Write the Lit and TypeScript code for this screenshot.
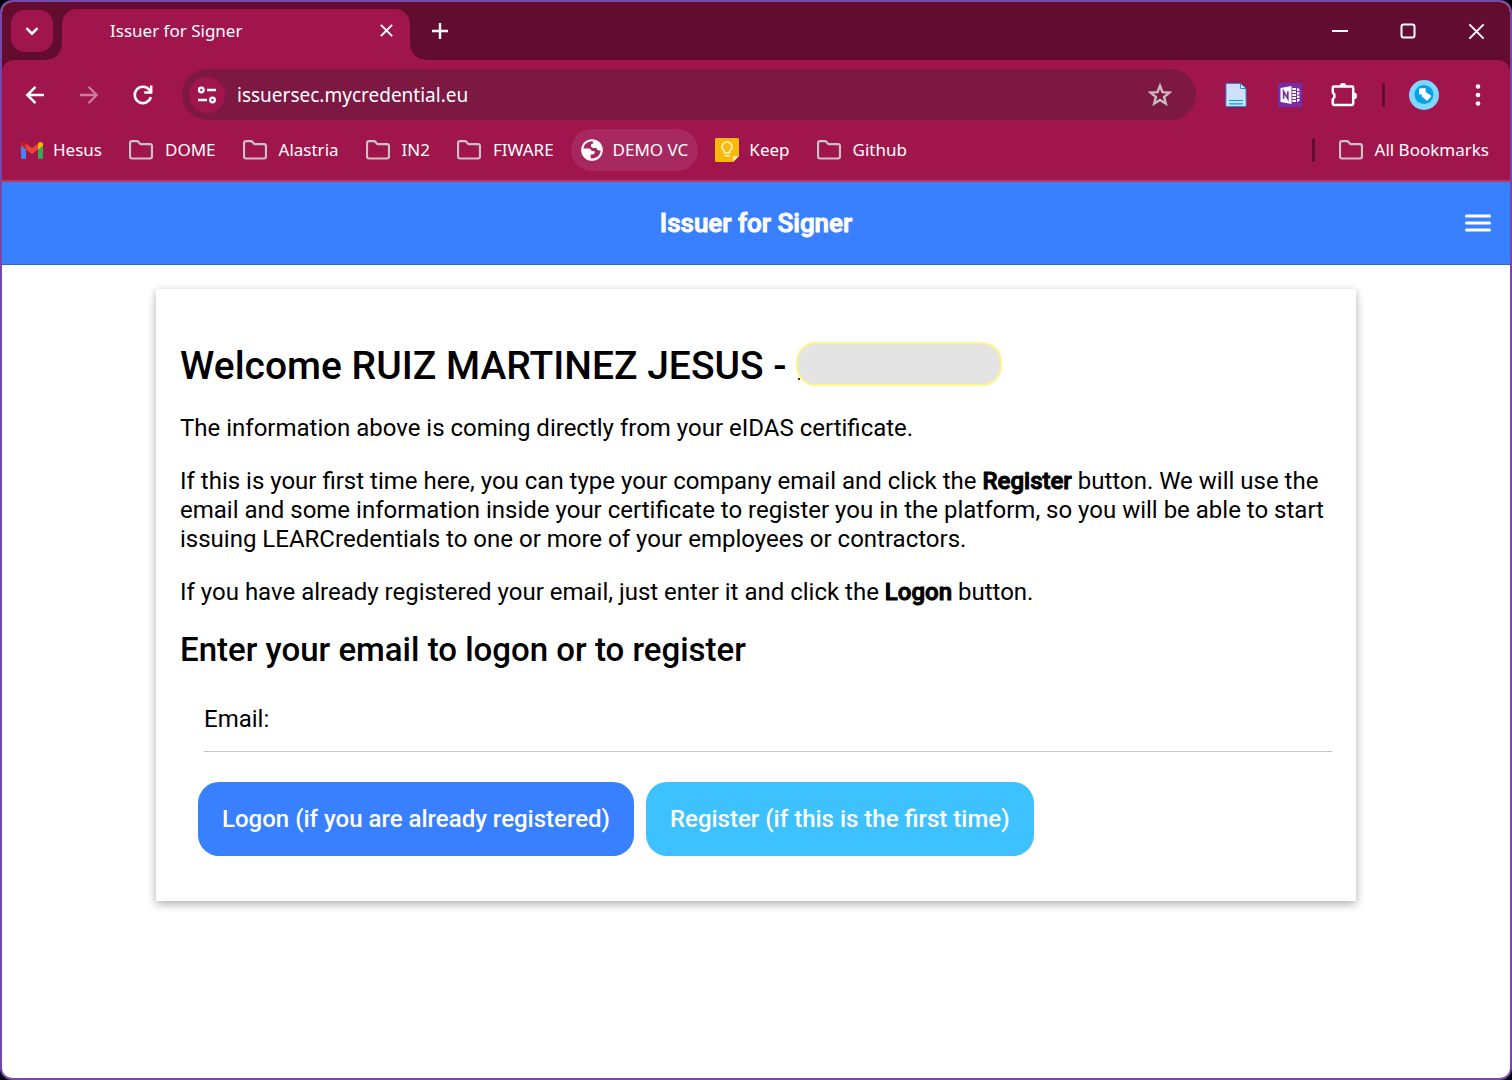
import { LitElement, html, css, svg } from "lit";
import { customElement } from "lit/decorators.js";

const folder = html`<svg class="folder" width="24" height="20" viewBox="0 0 24 20" aria-hidden="true">
  <path d="M1 3.200C1 2 1.800 1.200 3 1.200h5.600l3 3H21c1.200 0 2 .8 2 2V16.500c0 1.200-.8 2-2 2H3c-1.200 0-2-.8-2-2z" />
</svg>`;

const gmail = html`<svg width="22" height="17" viewBox="0 0 22 17" aria-hidden="true">
  <path fill="#4285f4" d="M0 3v12.500C0 16.300.7 17 1.500 17H5V6.500z" />
  <path fill="#34a853" d="M22 3v12.500c0 .8-.7 1.500-1.500 1.500H17V6.500z" />
  <path fill="#fbbc04" d="M17 1.500V7.500L22 3.800V2.300C22 .3 19.600-.7 18 .6z" />
  <path fill="#c5221f" d="M5 1.500V7.500L0 3.800V2.300C0 .3 2.400-.7 4 .6z" />
  <path fill="#ea4335" d="M5 7.500v-6l6 4.600 6-4.600v6l-6 4.600z" />
</svg>`;

const globe = html`<svg width="22" height="22" viewBox="0 0 22 22" aria-hidden="true">
  <circle cx="11" cy="11" r="10.800" fill="#fff" />
  <path fill="#a6285e" d="M11.500 2.300c-4.600-.2-8.300 2.800-9.100 7.200h5.200c1.900 0 2.600 1 2.900 2.600h2.200c1 0 1.200 1 1 1.700-.3 1-1.200 1.600-2.200 1.600H9.700v3.900c5 .8 9.300-2.500 10-7.300l-2.800-.9c-1-.4-1.200-1.200-1.300-2.200h-3.300c-1.600 0-2.300-.9-2.300-2.200 0-1.500 1-2.200 2.400-2.200z" />
</svg>`;

const keep = html`<svg width="24" height="24" viewBox="0 0 24 24" aria-hidden="true">
  <path fill="#f7b90c" d="M1.500 0h21C23.300 0 24 .7 24 1.500V18l-6 6H1.500C.7 24 0 23.300 0 22.500v-21C0 .7.700 0 1.500 0z" />
  <path fill="#fde9a8" d="M18 18h6l-6 6z" />
  <path fill="none" stroke="#fff3c9" stroke-width="1.500" d="M9.500 15v-1.800C7.800 12.200 7 10.700 7 9a5 5 0 0 1 10 0c0 1.700-.8 3.200-2.500 4.200V15zM9.500 17.800h5" />
</svg>`;

const cross = (size: number, width: number) => html`<svg class="line" width=${size} height=${size} viewBox="0 0 16 16" aria-hidden="true">
  ${svg`<path stroke-width=${width} d="M2 2l12 12M14 2L2 14" />`}
</svg>`;

const bookmarks = [
  { label: "Hesus", icon: gmail, kind: "favicon" },
  { label: "DOME", icon: folder, kind: "" },
  { label: "Alastria", icon: folder, kind: "" },
  { label: "IN2", icon: folder, kind: "" },
  { label: "FIWARE", icon: folder, kind: "" },
  { label: "DEMO VC", icon: globe, kind: "favicon hovered" },
  { label: "Keep", icon: keep, kind: "favicon" },
  { label: "Github", icon: folder, kind: "" },
];

@customElement("browser-chrome")
class BrowserChrome extends LitElement {
  static styles = css`
    :host {
      display: block;
      background: #620d30;
      color: #fff;
      font-family: "Noto Sans", "Open Sans", sans-serif;
      font-size: 17px;
    }
    * { box-sizing: border-box; }
    button, input {
      margin: 0;
      padding: 0;
      border: 0;
      background: none;
      color: inherit;
      font: inherit;
    }
    button, a { display: flex; align-items: center; justify-content: center; flex: none; }
    svg { display: block; flex: none; }
    .line { fill: none; stroke: #fff; stroke-linecap: butt; }
    .folder { fill: none; stroke: #c9c4c6; stroke-width: 2.2; }
    .strip { display: flex; align-items: center; height: 58px; padding-left: 9px; }
    .search { width: 42px; height: 42px; border-radius: 14px; background: #a1154d; }
    .tab {
      position: relative;
      display: flex;
      align-items: center;
      align-self: flex-end;
      flex: 0 1 348px;
      height: 51px;
      margin-left: 9px;
      padding: 0 12px 8px 48px;
      border-radius: 15px 15px 0 0;
      background: #a1154d;
    }
    .tab::before, .tab::after {
      content: "";
      position: absolute;
      bottom: 0;
      width: 15px;
      height: 15px;
    }
    .tab::before { right: 100%; background: radial-gradient(circle at 0 0, transparent 14px, #a1154d 15px); }
    .tab::after { left: 100%; background: radial-gradient(circle at 100% 0, transparent 14px, #a1154d 15px); }
    .title { flex: 1; white-space: nowrap; }
    .close { width: 24px; height: 24px; }
    .new { width: 42px; height: 42px; margin-left: 9px; }
    .controls { display: flex; margin-left: auto; }
    .controls button { width: 68px; height: 44px; }
    .panel { border-radius: 12px 12px 0 0; background: #a1154d; border-bottom: 2px solid #b83a62; }
    .toolbar { display: flex; align-items: center; padding: 9px 5px 0 6px; }
    .tool { width: 54px; height: 51px; }
    .omnibox {
      display: flex;
      align-items: center;
      flex: 1;
      min-width: 0;
      height: 51px;
      margin: 0 13px 0 12px;
      padding: 0 9px 0 7px;
      border-radius: 26px;
      background: #7c1842;
    }
    .site { width: 36px; height: 36px; border-radius: 50%; background: #a1154d; }
    .url { flex: 1; min-width: 0; padding-left: 12px; font-size: 19px; outline: 0; }
    .star { width: 54px; height: 42px; }
    .divider { width: 3px; height: 24px; border-radius: 2px; background: #620d30; }
    .toolbar .divider { margin: 0 12px 0 11px; }
    .bookmarks { display: flex; align-items: center; gap: 7px; height: 60px; padding: 0 11px 0 9px; }
    .bookmark {
      gap: 12px;
      height: 42px;
      padding: 0 10px;
      border-radius: 21px;
      color: #fff;
      text-decoration: none;
      white-space: nowrap;
    }
    .favicon { gap: 10px; }
    .name { padding-bottom: 2px; }
    .hovered { background: #a6285e; }
    .bookmarks .divider { margin: 0 7px 0 auto; }
  `;

  render() {
    return html`
      <div class="strip">
        <button class="search" aria-label="Search tabs">
          <svg class="line" width="16" height="16" viewBox="0 0 16 16"><path stroke-width="2.500" d="M2.500 5.200l5.500 5.500 5.500-5.500" /></svg>
        </button>
        <div class="tab">
          <span class="title">Issuer for Signer</span>
          <button class="close" aria-label="Close tab">${cross(15, 2.2)}</button>
        </div>
        <button class="new" aria-label="New tab">
          <svg class="line" width="16" height="16" viewBox="0 0 16 16"><path stroke-width="2.400" d="M8 0v16M0 8h16" /></svg>
        </button>
        <div class="controls">
          <button aria-label="Minimize">
            <svg class="line" width="16" height="16" viewBox="0 0 16 16"><path stroke-width="2" d="M0 8h16" /></svg>
          </button>
          <button aria-label="Maximize">
            <svg class="line" width="16" height="16" viewBox="0 0 16 16"><rect x="1.500" y="1.500" width="13" height="13" rx="2" stroke-width="2" /></svg>
          </button>
          <button aria-label="Close">${cross(19, 1.7)}</button>
        </div>
      </div>
      <div class="panel">
        <div class="toolbar">
          <button class="tool" aria-label="Back">
            <svg class="line" width="20" height="20" viewBox="0 0 20 20"><path stroke-width="2.500" d="M19 10H3M10.500 1.800L2.300 10l8.200 8.200" /></svg>
          </button>
          <button class="tool" aria-label="Forward">
            <svg class="line" width="20" height="20" viewBox="0 0 20 20" opacity=".45"><path stroke-width="2.300" d="M1 10h16M9.500 1.800l8.200 8.200-8.200 8.200" /></svg>
          </button>
          <button class="tool" aria-label="Reload">
            <svg class="line" width="22" height="22" viewBox="0 0 22 22"><path stroke-width="2.600" d="M18.800 13.200a8.200 8.200 0 1 1-1.300-7.200l1.300 1.800" /><path stroke-width="2.500" d="M19.200 1.500v7h-7" /></svg>
          </button>
          <div class="omnibox">
            <button class="site" aria-label="View site information">
              <svg class="line" width="20" height="18" viewBox="0 0 20 18"><g stroke-width="2.300"><circle cx="4.300" cy="4" r="2.300" /><path d="M10 4h9M1 14h9" /><circle cx="15.500" cy="14" r="2.300" /></g></svg>
            </button>
            <input class="url" aria-label="Address" value="issuersec.mycredential.eu" />
            <button class="star" aria-label="Bookmark this tab">
              <svg width="26" height="26" viewBox="0 0 26 26"><path fill="none" stroke="#c9b9c0" stroke-width="2.400" d="M13 3.800l2.500 6.300 6.900.5-5.300 4.400 1.700 6.700-5.800-3.700-5.800 3.700 1.700-6.700-5.300-4.400 6.900-.5z" /></svg>
            </button>
          </div>
          <button class="tool" aria-label="Document extension">
            <svg width="22" height="24" viewBox="0 0 22 24">
              <path fill="#cfe0fa" stroke="#2f86d1" d="M1 .5h14.500l5.500 5V23.500H1z" />
              <path fill="#e9f3ff" stroke="#2f86d1" d="M15.500.5v5H21z" />
              <path fill="#bfe6ff" d="M1.500 16h19v7h-19z" />
              <path stroke="#1594e8" stroke-width="1.200" d="M4 17.500h14M4 20.800h14" />
            </svg>
          </button>
          <button class="tool" aria-label="OneNote extension">
            <svg width="24" height="24" viewBox="0 0 24 24">
              <path fill="#7b2aa5" stroke="#5e34c0" d="M.5.500h23v23H.500z" />
              <path fill="#fff" d="M2.500 5l11-2v18l-11-2z" />
              <path fill="none" stroke="#7b2aa5" stroke-width="1.700" d="M5.600 15.800V8.400l4.200 7.200V8.200" />
              <path fill="#fff" d="M14.300 5h6v14h-6z" />
              <path fill="none" stroke="#7b2aa5" d="M14 7.500h4M14 10.500h4M14 13.500h4M14 16.500h4M18.500 5v14M18.500 8.500h3M18.500 12h3M18.500 15.500h3" />
              <path fill="#fff" d="M19.500 6h2v2h-2zM19.500 9.200h2v2.200h-2zM19.500 12.700h2v2.200h-2zM19.500 16h2v2h-2z" />
            </svg>
          </button>
          <button class="tool" aria-label="Extensions">
            <svg width="26" height="26" viewBox="0 0 26 26">
              <path fill="none" stroke="#fff" stroke-width="2.500" stroke-linejoin="round" d="M3 4.500h18c.8 0 1.200.4 1.200 1.200v16c0 .8-.4 1.200-1.200 1.200H3c-.8 0-1.200-.4-1.200-1.200v-4.500a4 4 0 0 0 0-6.600V5.700c0-.8.400-1.200 1.200-1.200z" />
              <path fill="#fff" d="M8.700 4.200a3.300 3.300 0 0 1 6.600 0zM22.700 10.600a3.300 3.300 0 0 1 0 6.600z" />
            </svg>
          </button>
          <span class="divider"></span>
          <button class="tool" aria-label="Profile">
            <svg width="30" height="30" viewBox="0 0 30 30">
              <circle cx="15" cy="15" r="15" fill="#80d8ff" /><circle cx="15" cy="14.500" r="9.500" fill="#03a0ec" />
              <path fill="#fff" d="M10 8.500l6.500-.5.300 4 5.700 4-4.300 5-5.600-4.600.4-2h-3z" />
            </svg>
          </button>
          <button class="tool" aria-label="Menu">
            <svg width="6" height="22" viewBox="0 0 6 22" fill="#fff"><circle cx="3" cy="2.500" r="2.300" /><circle cx="3" cy="11" r="2.300" /><circle cx="3" cy="19.500" r="2.300" /></svg>
          </button>
        </div>
        <nav class="bookmarks">
          ${bookmarks.map((b) => html`<a class="bookmark ${b.kind}" href="#">${b.icon}<span class="name">${b.label}</span></a>`)}
          <span class="divider"></span>
          <a class="bookmark" href="#">${folder}<span class="name">All Bookmarks</span></a>
        </nav>
      </div>
    `;
  }
}

@customElement("issuer-page")
class IssuerPage extends LitElement {
  static styles = css`
    :host {
      display: block;
      background: #fff;
      color: #000;
      font-family: Roboto, sans-serif;
      font-size: 24px;
      line-height: 29px;
    }
    * { box-sizing: border-box; }
    h1, h2, p { margin: 0; }
    button { border: 0; font: inherit; color: #fff; }
    .header {
      display: grid;
      grid-template-columns: 1fr auto 1fr;
      align-items: center;
      height: 83px;
      padding: 0 16px;
      border-bottom: 1px solid #2c68cf;
      background: #3880ff;
      color: #fff;
    }
    .brand { grid-column: 2; font-size: 26px; font-weight: 500; -webkit-text-stroke: 1px #fff; }
    .menu { justify-self: end; display: flex; padding: 3px; background: none; }
    .card {
      max-width: 1200px;
      margin: 24px auto;
      padding: 53px 24px 45px;
      box-shadow: 0 3px 9px rgba(0, 0, 0, 0.32);
    }
    .welcome { font-size: 39px; line-height: 48px; font-weight: 500; }
    .redacted {
      position: relative;
      display: inline-block;
      width: 206px;
      height: 44px;
      border: 2px solid #fdf58c;
      border-radius: 20px;
      background: #e4e4e4;
      vertical-align: top;
    }
    .redacted::before {
      content: "";
      position: absolute;
      left: 0;
      bottom: 4px;
      width: 2px;
      height: 2px;
      background: #4d3300;
    }
    .text { margin-top: 24px; }
    .strong { font-weight: 500; -webkit-text-stroke: 1px #000; }
    .prompt { margin-top: 24px; font-size: 33px; line-height: 38px; font-weight: 500; }
    .field {
      display: flex;
      align-items: center;
      gap: 12px;
      height: 65px;
      margin: 18px 0 0 24px;
      border-bottom: 1px solid #c8c8c8;
    }
    .email { flex: 1; min-width: 0; height: 40px; border: 0; outline: 0; font: inherit; }
    .actions { display: flex; flex-wrap: wrap; gap: 12px; margin: 30px 18px 0; }
    .action { height: 74px; padding: 0 24px; border-radius: 21px; font-weight: 500; }
    .logon { background: #3880ff; }
    .register { background: #3dc2ff; }
  `;

  render() {
    return html`
      <header class="header">
        <span class="brand">Issuer for Signer</span>
        <button class="menu" aria-label="Open menu">
          <svg width="26" height="20" viewBox="0 0 26 20"><path stroke="#fff" stroke-width="3" stroke-linecap="round" d="M1.500 3h23M1.500 10h23M1.500 17h23" /></svg>
        </button>
      </header>
      <main class="card">
        <h1 class="welcome">Welcome RUIZ MARTINEZ JESUS - <span class="redacted"></span></h1>
        <p class="text">The information above is coming directly from your eIDAS certificate.</p>
        <p class="text">If this is your first time here, you can type your company email and click the <b class="strong">Register</b> button. We will use the email and some information inside your certificate to register you in the platform, so you will be able to start issuing LEARCredentials to one or more of your employees or contractors.</p>
        <p class="text">If you have already registered your email, just enter it and click the <b class="strong">Logon</b> button.</p>
        <h2 class="prompt">Enter your email to logon or to register</h2>
        <form @submit=${(e: Event) => e.preventDefault()}>
          <div class="field">
            <label for="email">Email:</label>
            <input class="email" id="email" type="email" />
          </div>
          <div class="actions">
            <button class="action logon">Logon (if you are already registered)</button>
            <button class="action register">Register (if this is the first time)</button>
          </div>
        </form>
      </main>
    `;
  }
}

@customElement("app-root")
class AppRoot extends LitElement {
  static styles = css`
    :host { display: block; background: #000; }
    .window {
      box-sizing: border-box;
      min-height: 100vh;
      overflow: hidden;
      border: 2px solid #744aa8;
      border-radius: 12px;
      background: #fff;
    }
  `;

  render() {
    return html`<div class="window"><browser-chrome></browser-chrome><issuer-page></issuer-page></div>`;
  }
}
